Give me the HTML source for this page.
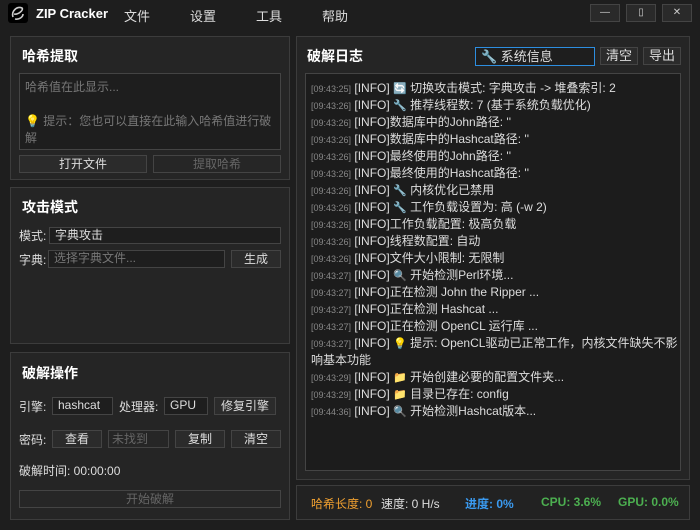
<!DOCTYPE html>
<html><head><meta charset="utf-8"><style>
*{box-sizing:border-box;margin:0;padding:0}
body{width:700px;height:530px;background:#1e1e1e;font-family:"Liberation Sans","Noto Sans CJK SC",sans-serif;color:#ddd;position:relative;overflow:hidden;font-size:12px}
.a{position:absolute}
.pan{position:absolute;background:#252525;border:1px solid #3c3c3c}
.h{position:absolute;font-weight:bold;font-size:14px;color:#fff}
.btn{position:absolute;background:#2b2b2b;border:1px solid #444;text-align:center;font-size:12px;line-height:16px;color:#ddd}
.inp{position:absolute;background:#1e1e1e;border:1px solid #444;font-size:12px;line-height:15px;padding-left:5px;color:#ddd}
.lbl{position:absolute;font-size:12px;color:#ddd}
.log{position:absolute;left:305px;top:73px;width:376px;height:398px;background:#1c1c1c;border:1px solid #444;padding:6px 0 0 5px}
.log div{font-size:12px;line-height:17px;height:17px;white-space:nowrap;color:#ddd;overflow:visible}
.log span.t{font-size:9px;color:#888}
.log i{font-style:normal;font-size:11px;line-height:10px}
.wb{position:absolute;top:4px;width:30px;height:18px;background:#2a2a2a;border:1px solid #444;color:#ccc;font-size:10px;text-align:center;line-height:16px}
</style></head><body>
<div class="a" style="left:8px;top:3px;width:20px;height:20px;background:#000;border-radius:3px"><svg width="20" height="20"><path d="M5 14 C3 8,9 3,14 5 C16 7,10 12,6 11 M7 16 C11 17,15 14,15 11" stroke="#ccc" stroke-width="1.6" fill="none"/></svg></div>
<div class="a" style="left:36px;top:6px;font-weight:bold;font-size:13px;color:#fff">ZIP Cracker</div>
<div class="a" style="left:124px;top:6px;font-size:13px">文件</div>
<div class="a" style="left:190px;top:6px;font-size:13px">设置</div>
<div class="a" style="left:256px;top:6px;font-size:13px">工具</div>
<div class="a" style="left:322px;top:6px;font-size:13px">帮助</div>
<div class="wb" style="left:590px">—</div>
<div class="wb" style="left:626px">▯</div>
<div class="wb" style="left:662px">✕</div>

<div class="pan" style="left:10px;top:36px;width:280px;height:144px"></div>
<div class="h" style="left:22px;top:46px">哈希提取</div>
<div class="inp" style="left:19px;top:73px;width:262px;height:77px;color:#777;padding:5px 5px;line-height:17px">哈希值在此显示...<br><br><span style="color:#fc3">💡</span> 提示：您也可以直接在此输入哈希值进行破解</div>
<div class="btn" style="left:19px;top:155px;width:128px;height:18px">打开文件</div>
<div class="btn" style="left:153px;top:155px;width:128px;height:18px;color:#666;background:#262626">提取哈希</div>

<div class="pan" style="left:10px;top:187px;width:280px;height:157px"></div>
<div class="h" style="left:22px;top:197px">攻击模式</div>
<div class="lbl" style="left:19px;top:227px">模式:</div>
<div class="inp" style="left:49px;top:227px;width:232px;height:17px">字典攻击</div>
<div class="lbl" style="left:19px;top:251px">字典:</div>
<div class="inp" style="left:48px;top:250px;width:177px;height:18px;color:#777">选择字典文件...</div>
<div class="btn" style="left:231px;top:250px;width:50px;height:18px">生成</div>

<div class="pan" style="left:10px;top:352px;width:280px;height:168px"></div>
<div class="h" style="left:22px;top:363px">破解操作</div>
<div class="lbl" style="left:19px;top:398px">引擎:</div>
<div class="inp" style="left:52px;top:397px;width:61px;height:18px">hashcat</div>
<div class="lbl" style="left:119px;top:398px">处理器:</div>
<div class="inp" style="left:164px;top:397px;width:44px;height:18px">GPU</div>
<div class="btn" style="left:214px;top:397px;width:62px;height:18px">修复引擎</div>
<div class="lbl" style="left:19px;top:431px">密码:</div>
<div class="btn" style="left:52px;top:430px;width:50px;height:18px">查看</div>
<div class="btn" style="left:108px;top:430px;width:61px;height:18px;color:#666;background:#262626;text-align:left;padding-left:3px">未找到</div>
<div class="btn" style="left:175px;top:430px;width:50px;height:18px">复制</div>
<div class="btn" style="left:231px;top:430px;width:50px;height:18px">清空</div>
<div class="lbl" style="left:19px;top:462px">破解时间: 00:00:00</div>
<div class="btn" style="left:19px;top:490px;width:262px;height:18px;color:#666;background:#262626">开始破解</div>

<div class="pan" style="left:296px;top:36px;width:394px;height:444px"></div>
<div class="h" style="left:307px;top:46px">破解日志</div>
<div class="inp" style="left:475px;top:47px;width:120px;height:19px;border-color:#2d8ee0;font-size:13px;line-height:17px">🔧 系统信息</div>
<div class="btn" style="left:600px;top:47px;width:38px;height:18px;font-size:13px">清空</div>
<div class="btn" style="left:643px;top:47px;width:38px;height:18px;font-size:13px">导出</div>
<div class="log">
<div><span class="t">[09:43:25]</span> [INFO] <i style="color:#3af">🔄</i> 切换攻击模式: 字典攻击 -&gt; 堆叠索引: 2</div>
<div><span class="t">[09:43:26]</span> [INFO] <i>🔧</i> 推荐线程数: 7 (基于系统负载优化)</div>
<div><span class="t">[09:43:26]</span> [INFO]数据库中的John路径: ''</div>
<div><span class="t">[09:43:26]</span> [INFO]数据库中的Hashcat路径: ''</div>
<div><span class="t">[09:43:26]</span> [INFO]最终使用的John路径: ''</div>
<div><span class="t">[09:43:26]</span> [INFO]最终使用的Hashcat路径: ''</div>
<div><span class="t">[09:43:26]</span> [INFO] <i>🔧</i> 内核优化已禁用</div>
<div><span class="t">[09:43:26]</span> [INFO] <i>🔧</i> 工作负载设置为: 高 (-w 2)</div>
<div><span class="t">[09:43:26]</span> [INFO]工作负载配置: 极高负载</div>
<div><span class="t">[09:43:26]</span> [INFO]线程数配置: 自动</div>
<div><span class="t">[09:43:26]</span> [INFO]文件大小限制: 无限制</div>
<div><span class="t">[09:43:27]</span> [INFO] <i>🔍</i> 开始检测Perl环境...</div>
<div><span class="t">[09:43:27]</span> [INFO]正在检测 John the Ripper ...</div>
<div><span class="t">[09:43:27]</span> [INFO]正在检测 Hashcat ...</div>
<div><span class="t">[09:43:27]</span> [INFO]正在检测 OpenCL 运行库 ...</div>
<div><span class="t">[09:43:27]</span> [INFO] <i>💡</i> 提示: OpenCL驱动已正常工作，内核文件缺失不影</div>
<div>响基本功能</div>
<div><span class="t">[09:43:29]</span> [INFO] <i>📁</i> 开始创建必要的配置文件夹...</div>
<div><span class="t">[09:43:29]</span> [INFO] <i>📁</i> 目录已存在: config</div>
<div><span class="t">[09:44:36]</span> [INFO] <i>🔍</i> 开始检测Hashcat版本...</div>
</div>

<div class="pan" style="left:296px;top:485px;width:394px;height:35px;background:#222"></div>
<div class="a" style="left:311px;top:495px;color:#f0a030">哈希长度: 0</div>
<div class="a" style="left:381px;top:495px">速度: 0 H/s</div>
<div class="a" style="left:465px;top:495px;color:#3a9af0;font-weight:bold">进度: 0%</div>
<div class="a" style="left:541px;top:495px;color:#4caf50;font-weight:bold">CPU: 3.6%</div>
<div class="a" style="left:618px;top:495px;color:#4caf50;font-weight:bold">GPU: 0.0%</div>
</body></html>
